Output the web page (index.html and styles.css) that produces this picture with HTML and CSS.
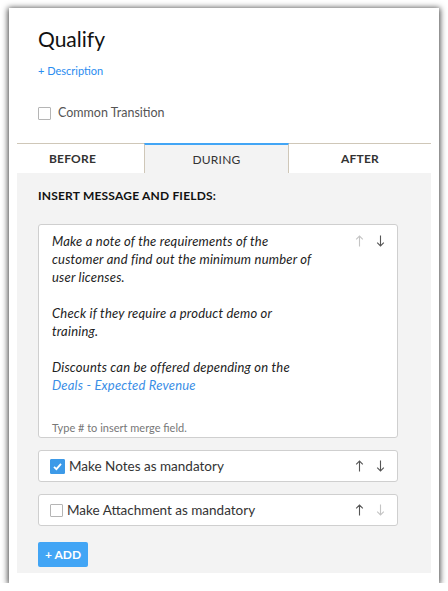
FILE: index.html
```html
<!DOCTYPE html>
<html>
<head>
<meta charset="utf-8">
<link rel="stylesheet" href="styles.css">
</head>
<body>
<div class="card">
  <div class="header">
    <h1 class="title">Qualify</h1>
    <a class="desc">+ Description</a>
    <label class="common"><span class="box"></span>Common Transition</label>
  </div>
  <div class="tabs">
    <div class="tab">BEFORE</div>
    <div class="tab active">DURING</div>
    <div class="tab">AFTER</div>
  </div>
  <div class="panel">
    <div class="heading">INSERT MESSAGE AND FIELDS:</div>
    <div class="editor">
      <div class="arrows"><svg class="arr dim" viewBox="0 0 9 12" width="9" height="12"><path d="M4.5 11.5V1M1.2 4.3 4.5 1l3.3 3.3"/></svg><svg class="arr" viewBox="0 0 9 12" width="9" height="12"><path d="M4.5 0.5V11M1.2 7.7 4.5 11l3.3-3.3"/></svg></div>
      <div class="msg">
        <p>Make a note of the requirements of the<br>customer and find out the minimum number of<br>user licenses.</p>
        <p>Check if they require a product demo or<br>training.</p>
        <p>Discounts can be offered depending on the<br><span class="field">Deals - Expected Revenue</span></p>
      </div>
      <div class="hint">Type # to insert merge field.</div>
    </div>
    <div class="row">
      <span class="box checked"><svg viewBox="0 0 13 13" width="13" height="13"><path d="M3 6.8 L5.4 9.2 L10 3.8" fill="none" stroke="#fff" stroke-width="1.8"/></svg></span>
      <span class="label">Make Notes as mandatory</span>
      <div class="arrows"><svg class="arr" viewBox="0 0 9 12" width="9" height="12"><path d="M4.5 11.5V1M1.2 4.3 4.5 1l3.3 3.3"/></svg><svg class="arr" viewBox="0 0 9 12" width="9" height="12"><path d="M4.5 0.5V11M1.2 7.7 4.5 11l3.3-3.3"/></svg></div>
    </div>
    <div class="row">
      <span class="box"></span>
      <span class="label">Make Attachment as mandatory</span>
      <div class="arrows"><svg class="arr" viewBox="0 0 9 12" width="9" height="12"><path d="M4.5 11.5V1M1.2 4.3 4.5 1l3.3 3.3"/></svg><svg class="arr dim" viewBox="0 0 9 12" width="9" height="12"><path d="M4.5 0.5V11M1.2 7.7 4.5 11l3.3-3.3"/></svg></div>
    </div>
    <button class="add">+ ADD</button>
  </div>
</div>
</body>
</html>
```
FILE: styles.css
```css
html, body { margin: 0; padding: 0; background: #fff; }
body { font-family: Lato, "Open Sans", sans-serif; color: #222; }
.card {
  margin: 8px 0 0 9px;
  width: 430px;
  height: 575px;
  box-sizing: border-box;
  background: #fff;
  padding: 0 8px 10px;
  box-shadow: 0 1px 6px 1px rgba(0,0,0,0.75);
  display: flex;
  flex-direction: column;
}
.header { padding: 17px 0 0 21px; height: 135px; box-sizing: border-box; }
.title { margin: 0; font-size: 21px; font-weight: 400; line-height: 28px; color: #111; }
.desc { display: block; margin-top: 11px; font-size: 11px; color: #2a8cf0; line-height: 14px; }
.common { display: flex; align-items: center; margin-top: 27px; font-size: 12.5px; color: #555; line-height: 16px; }
.box { width: 11px; height: 11px; border: 1px solid #b5b5b5; border-radius: 1px; background: #fff; margin-right: 7px; display: inline-block; flex: none; }
.tabs { display: flex; height: 30px; }
.tab { flex: 1; display: flex; align-items: center; justify-content: center; font-size: 12px; font-weight: 700; color: #333; border-top: 1px solid #cfc7b8; box-sizing: border-box; letter-spacing: 0.2px; }
.tab:first-child { flex: 0 0 127px; padding-right: 16px; }
.tab:nth-child(2) { flex: 0 0 145px; }
.tab.active { background: #f3f3f3; border-top: 2px solid #42a5f5; border-left: 1px solid #cfc7b8; border-right: 1px solid #cfc7b8; font-weight: 400; }
.panel { flex: 1; background: #f3f3f3; padding: 16px 33px 0 21px; }
.heading { font-size: 12px; font-weight: 700; color: #111; line-height: 14px; letter-spacing: 0.2px; }
.editor { position: relative; margin-top: 21px; height: 214px; box-sizing: border-box; background: #fff; border: 1px solid #cfcfcf; border-radius: 3px; padding: 7px 12px 0 13px; }
.msg { font-style: italic; font-size: 13px; line-height: 18px; color: #222; letter-spacing: 0.2px; }
.msg p { margin: 0 0 18px; }
.field { color: #3a8ee6; }
.hint { position: absolute; left: 13px; bottom: 3px; font-size: 11px; color: #777; }
.editor .arrows { position: absolute; right: 12px; top: 10px; }
.arrows { display: flex; gap: 12px; margin-left: auto; }
.arr { fill: none; stroke: #555; stroke-width: 1.1; }
.arr.dim { stroke: #c4c4c4; }
.row { display: flex; align-items: center; margin-top: 12px; height: 32px; box-sizing: border-box; background: #fff; border: 1px solid #cfcfcf; border-radius: 3px; padding: 0 12px 0 11px; }
.row + .row { margin-top: 12px; }
.row .box { margin-right: 4px; width: 11px; height: 11px; }
.box.checked { background: #3d9ae8; border-color: #3d9ae8; width: 13px; height: 13px; display: flex; }
.label { font-size: 13.5px; color: #333; }
.add { margin-top: 16px; height: 25px; padding: 0 7px; border: none; border-radius: 2px; background: #42a5f5; color: #fff; font-family: inherit; font-size: 12px; font-weight: 700; }
```
